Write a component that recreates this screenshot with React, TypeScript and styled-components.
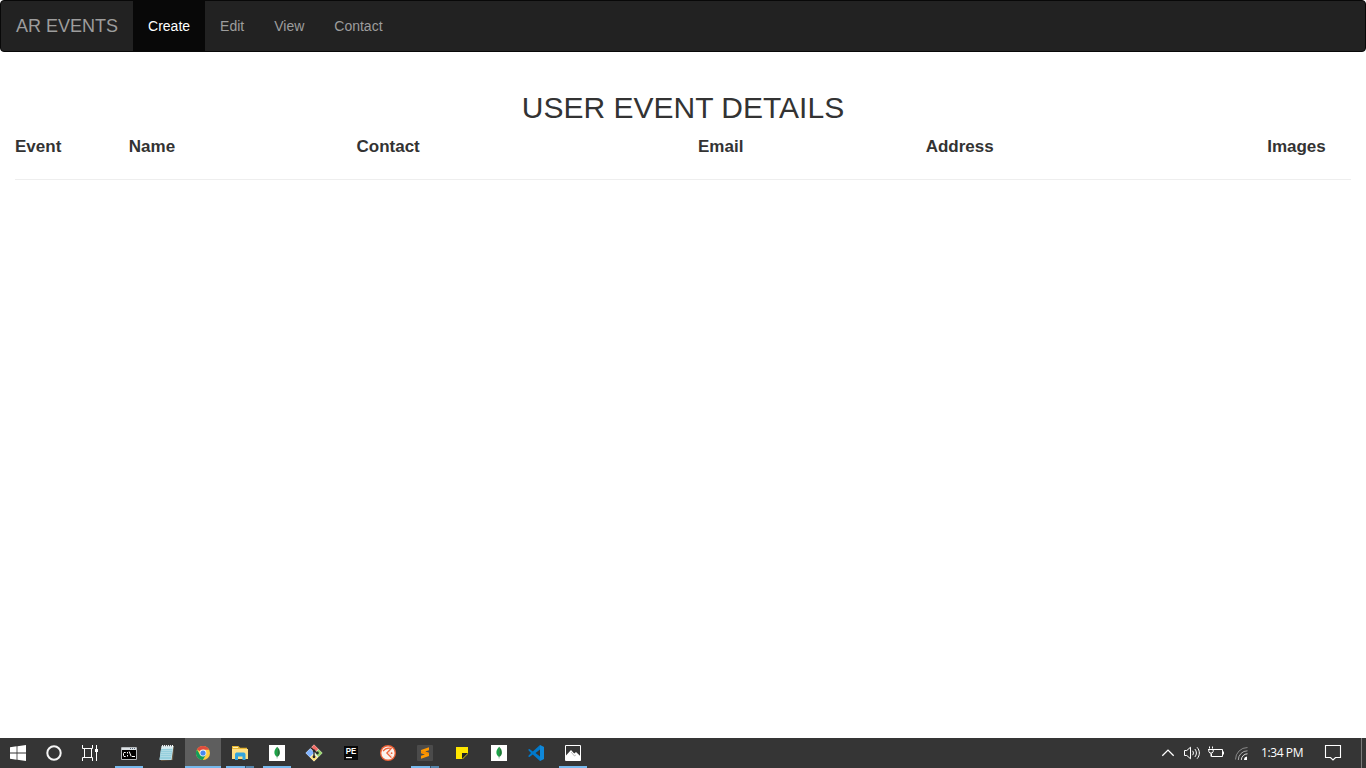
import React from "react";
import styled, { createGlobalStyle } from "styled-components";

const GlobalStyle = createGlobalStyle`
  * { box-sizing: border-box; }
  body {
    margin: 0;
    background: #fff;
    color: #333;
    font-family: "Liberation Sans", Arial, sans-serif;
    font-size: 14px;
    line-height: 1.42857143;
    overflow: hidden;
  }
`;

const Screen = styled.div`
  display: flex;
  flex-direction: column;
  height: 768px;
`;

const Navbar = styled.nav`
  display: flex;
  height: 52px;
  background: #222;
  border: 1px solid #080808;
  border-radius: 4px;
`;

const Brand = styled.a`
  padding: 15px;
  font-size: 18px;
  line-height: 20px;
  color: #9d9d9d;
`;

const NavLink = styled.a<{ $active?: boolean }>`
  padding: 15px;
  line-height: 20px;
  color: ${(p) => (p.$active ? "#fff" : "#9d9d9d")};
  background: ${(p) => (p.$active ? "#080808" : "transparent")};
`;

const Content = styled.main`
  flex: 1;
  padding: 39px 15px 0;
`;

const Title = styled.h2`
  margin: 0 0 11px;
  font-size: 30px;
  font-weight: 400;
  line-height: 33px;
  text-align: center;
`;

const HeaderRow = styled.div`
  display: grid;
  grid-template-columns: repeat(12, 1fr);
  margin: 0 -15px;
  font-size: 17px;
  font-weight: 700;
  line-height: 24px;
`;

const HeaderCell = styled.div<{ $span: number }>`
  grid-column: span ${(p) => p.$span};
  padding-left: 15px;
`;

const Divider = styled.hr`
  margin: 20px 0;
  border: 0;
  border-top: 1px solid #eee;
`;

const Taskbar = styled.footer`
  display: flex;
  height: 30px;
  background: #353535;
`;

const StartGroup = styled.div`
  display: flex;
  margin-right: 3px;
`;

const AppGroup = styled.div`
  display: flex;
  gap: 1px;
`;

type AppState = "idle" | "open" | "focused" | "stacked";

const underline: Record<AppState, string> = {
  idle: "none",
  open: "linear-gradient(#76b9ed, #76b9ed) 4px 28px / 28px 2px no-repeat",
  focused: "linear-gradient(#76b9ed, #76b9ed) 0 28px / 36px 2px no-repeat",
  stacked:
    "linear-gradient(90deg, #76b9ed 19px, #35536a 19px, #35536a 20px, #5485ab 20px) 4px 28px / 28px 2px no-repeat",
};

const TaskButton = styled.div<{ $state?: AppState }>`
  width: 36px;
  height: 30px;
  background: ${(p) => underline[p.$state ?? "idle"]};
  background-color: ${(p) => (p.$state === "focused" ? "#5e5e5e" : "transparent")};
`;

const Glyph = styled.svg`
  display: block;
  height: 30px;
`;

const Tray = styled.div`
  display: flex;
  margin-left: auto;
`;

const Clock = styled.div`
  width: 63px;
  padding-left: 9px;
  color: #fff;
  font: 12px/30px "Open Sans", "Noto Sans", sans-serif;
  letter-spacing: -0.4px;
  white-space: nowrap;
`;

const ShowDesktop = styled.div`
  width: 5px;
  margin-left: 10px;
  border-left: 1px solid #7b7b7b;
`;

const Icon = ({ w = 36, children }: { w?: number; children: React.ReactNode }) => (
  <Glyph width={w} height={30} viewBox={`0 0 ${w} 30`} fill="none">
    {children}
  </Glyph>
);

const WindowsIcon = () => (
  <Icon>
    <path fill="#fff" d="M10 9.2l6.6-.9v6.2H10zM17.4 8.2L26 7v7.5h-8.6zM10 15.4h6.6v6.3l-6.6-.9zM17.4 15.4H26V23l-8.6-1.2z" />
  </Icon>
);

const SearchIcon = () => (
  <Icon>
    <circle cx="18" cy="15" r="6.7" stroke="#f4f4f4" strokeWidth="2" />
  </Icon>
);

const TaskViewIcon = () => (
  <Icon>
    <path stroke="#fff" d="M10.5 7v3.5h10V7M10.5 23v-3.5h10V23M12.5 10.5v9M19.5 10.5v9M24.5 7v16" />
    <path fill="#fff" d="M23 11h3v3h-3z" />
  </Icon>
);

const TerminalIcon = () => (
  <Icon>
    <path fill="#000" stroke="#b5b9bc" d="M10.5 9.5h15v12h-15z" />
    <path fill="#dce2e5" d="M11 10h14v2H11z" />
    <path fill="#567" d="M19 10h1v1h-1zM21 10h1v1h-1zM23 10h1v1h-1z" />
    <path stroke="#fff" d="M14.7 14.5h-1.7l-.5 1v2l.5 1h1.7M16.5 14v1.5M16.5 17v1.5M18.2 13.5l2 5M21 18.5h3" />
  </Icon>
);

const NotepadIcon = () => (
  <Icon>
    <path fill="#6b5c45" d="M14 8h12l-1 14-12 1z" />
    <path fill="#d8edf2" d="M13.5 8h12l-2 14h-12z" />
    <path fill="#95cfdd" d="M13 11l11.6-.3L23 21.5H11.5z" />
    <path stroke="#c2e2e9" strokeWidth=".6" d="M13.5 12.5H24M13 14.5h10.7M12.7 16.5h10.7M12.5 18.5H23" />
    <path stroke="#fff" d="M14.5 7v2M16.5 7v2M18.5 7v2M20.5 7v2M22.5 7v2M24.5 7v2" />
    <path stroke="#7f8c92" strokeWidth=".5" d="M15.2 7v2M17.2 7v2M19.2 7v2M21.2 7v2M23.2 7v2" />
  </Icon>
);

const ChromeIcon = () => (
  <Icon>
    <circle cx="18" cy="15" r="7" fill="#ffcd40" />
    <path fill="#df4b3e" d="M18 15l-6.1-3.5A7 7 0 0 1 24.1 11.7H18z" />
    <path fill="#119d5b" d="M11.9 11.5A7 7 0 0 0 17.8 22l3.1-5.3L18 15l-3 1.7z" />
    <circle cx="18" cy="15" r="3.4" fill="#f5f5f5" />
    <circle cx="18" cy="15" r="2.6" fill="#4688f1" />
  </Icon>
);

const ExplorerIcon = () => (
  <Icon>
    <path fill="#e8b732" d="M10 8h6.5l1.5 1.7h7V13H10z" />
    <path fill="#fff2b3" d="M11 9h5v1h-5z" />
    <path fill="#ffe084" d="M10 11h16v10H10z" />
    <path fill="#33a5dd" d="M13 22v-6.2l1.2-1.3h8l1.3 1.3V22H20.5v-3.5h-4.5V22z" />
  </Icon>
);

const LeafIcon = () => (
  <Icon>
    <path fill="#fff" d="M10 7h16v16H10z" />
    <path fill="#1ba548" d="M18.2 8.7c-2 2-2.9 3.7-2.8 6 0 1.6 1 3.2 2.8 4.4z" />
    <path fill="#1c7a35" d="M18.2 8.7c2 2 2.8 3.6 2.7 6.2 0 1.5-1 3-2.8 4.2z" />
    <path stroke="#86b59a" strokeWidth=".8" d="M18.1 18.5v2" />
  </Icon>
);

const GitIcon = () => (
  <Icon>
    <path fill="#efeee8" d="M18 6.5l8.5 8.5-8.5 8.5L9.5 15z" />
    <path fill="#f16e68" d="M18 6.8l4.3 4.3-3 3L15 9.9z" />
    <path fill="#80b3ff" d="M14.1 10.8l4 4-4.3 4.3L9.8 15z" />
    <path fill="#ffe37d" d="M14.4 19.6l3.4-3.5 3.8 3.6-3.6 3.5z" />
    <path fill="#98d36f" d="M22.8 11.6l3.5 3.4-3.8 3.9-3.4-3.9z" />
    <path stroke="#26272b" strokeWidth="1.3" d="M14.5 9.5l6 5.2M18 12.5V20" />
    <circle cx="18" cy="12.7" r="1.3" fill="#26272b" />
    <circle cx="18" cy="18.8" r="1.4" fill="#26272b" />
    <circle cx="21.4" cy="15" r="1.4" fill="#26272b" />
  </Icon>
);

const PyCharmIcon = () => (
  <Icon>
    <path fill="#080808" d="M11 8h14v14H11z" />
    <path fill="#fff" d="M13 19h6v1.2h-6z" />
    <text x="12.7" y="16" fill="#fff" fontFamily="Liberation Sans, sans-serif" fontSize="9" fontWeight="700" textLength="10.5" lengthAdjust="spacingAndGlyphs">PE</text>
  </Icon>
);

const FishIcon = () => (
  <Icon>
    <circle cx="18" cy="15" r="8" fill="#ee6237" />
    <circle cx="18" cy="15" r="6.6" fill="#faf3ef" />
    <path stroke="#ee6237" strokeWidth="1.2" d="M13 13.2c2-2.8 4.5-3.6 8.2-2.9L16.8 15l4.6 4.6" />
    <path stroke="#ee6237" strokeWidth=".8" d="M21.4 10.3L18.7 15l3.6 3.8" opacity=".35" />
    <circle cx="21.6" cy="15.2" r=".9" fill="#ee6237" />
  </Icon>
);

const SublimeIcon = () => (
  <Icon>
    <rect x="10" y="7" width="16" height="16" rx="1" fill="#4b4b4b" />
    <path fill="#ff9800" d="M14 11.9l8-2.6v3L18.2 13.5l3.8 1.2v3.2l-8 2.8v-3l3.9-1.3-3.9-1.2z" />
    <path fill="#e87f00" d="M14 12.8l8 2.3v1.4l-8-2.1z" opacity=".5" />
  </Icon>
);

const StickyNotesIcon = () => (
  <Icon>
    <path fill="#ffe600" d="M12 9h12v12H12z" />
    <path fill="#212326" d="M18 15h6l-6 6z" />
    <path fill="#353535" d="M24 15.8V21h-5.2z" />
  </Icon>
);

const VSCodeIcon = () => (
  <Icon>
    <path fill="#0079cc" d="M22 7l4 1.9v12.2L22 23l-7.2-6.4-3.3 2.5L10 18.3l3-3.3-3-3.3 1.5-.8 3.3 2.5zM22 11.5L17.5 15l4.5 3.5z" />
    <path fill="#229bea" d="M22 7l4 1.9v12.2L22 23z" opacity=".45" />
  </Icon>
);

const PhotosIcon = () => (
  <Icon>
    <path fill="#353535" stroke="#fff" d="M10.5 7.5h15v15h-15z" />
    <path fill="#fff" d="M11 17.5l5-5.5 3.2 3.5 1.8-1.5 4.5 4.2v4.3H11z" />
    <path stroke="#777" d="M16 14l3.5 4 1.3-1" strokeWidth=".5" />
  </Icon>
);

const ChevronIcon = () => (
  <Icon w={24}>
    <path stroke="#fff" strokeWidth="1.3" d="M6.3 17.8l5.7-5.7 5.7 5.7" />
  </Icon>
);

const VolumeIcon = () => (
  <Icon w={24}>
    <path stroke="#fff" d="M4.5 12.5h2.3l3.7-3.3v11.6l-3.7-3.3H4.5zM12.5 12.8c1.2 1.4 1.2 3 0 4.4M14.8 11c2.1 2.4 2.1 5.6 0 8M17.1 9.3c3 3.4 3 8 0 11.4" />
  </Icon>
);

const BatteryIcon = () => (
  <Icon w={24}>
    <path stroke="#fff" d="M10 11.5h8.5v7h-11V16M19.5 13.5v3" />
    <path stroke="#fff" d="M5.5 8.5v2M8.5 8.5v2M4 11.5h6M4.8 12v1.5l1 1.5h2.4l1-1.5V12M7 15v3.5" />
  </Icon>
);

const WifiIcon = () => (
  <Icon w={24}>
    <path stroke="#888" d="M7.5 21.5A12 12 0 0 1 19.5 9.5" />
    <path stroke="#aaa" d="M10.3 22a9.2 9.2 0 0 1 9.2-9.2" />
    <path stroke="#ddd" d="M13.3 22a6.3 6.3 0 0 1 6.2-6.2" />
    <path fill="#fff" d="M16 22a3.5 3.5 0 0 1 3-3.5V22z" />
  </Icon>
);

const ActionCenterIcon = () => (
  <Icon>
    <path stroke="#fff" strokeWidth="1.1" d="M10.5 7.5h15v12h-5L18 22l-2.5-2.5h-5z" />
  </Icon>
);

const navLinks = ["Create", "Edit", "View", "Contact"];

const columns: [string, number][] = [
  ["Event", 1],
  ["Name", 2],
  ["Contact", 3],
  ["Email", 2],
  ["Address", 3],
  ["Images", 1],
];

const apps: [React.ComponentType, AppState][] = [
  [TerminalIcon, "open"],
  [NotepadIcon, "idle"],
  [ChromeIcon, "focused"],
  [ExplorerIcon, "stacked"],
  [LeafIcon, "open"],
  [GitIcon, "idle"],
  [PyCharmIcon, "idle"],
  [FishIcon, "idle"],
  [SublimeIcon, "stacked"],
  [StickyNotesIcon, "idle"],
  [LeafIcon, "idle"],
  [VSCodeIcon, "idle"],
  [PhotosIcon, "open"],
];

export default function App() {
  return (
    <Screen>
      <GlobalStyle />
      <Navbar>
        <Brand>AR EVENTS</Brand>
        {navLinks.map((label, i) => (
          <NavLink key={label} $active={i === 0}>
            {label}
          </NavLink>
        ))}
      </Navbar>
      <Content>
        <Title>USER EVENT DETAILS</Title>
        <HeaderRow>
          {columns.map(([label, span]) => (
            <HeaderCell key={label} $span={span}>
              {label}
            </HeaderCell>
          ))}
        </HeaderRow>
        <Divider />
      </Content>
      <Taskbar>
        <StartGroup>
          <TaskButton><WindowsIcon /></TaskButton>
          <TaskButton><SearchIcon /></TaskButton>
          <TaskButton><TaskViewIcon /></TaskButton>
        </StartGroup>
        <AppGroup>
          {apps.map(([AppIcon, state], i) => (
            <TaskButton key={i} $state={state}>
              <AppIcon />
            </TaskButton>
          ))}
        </AppGroup>
        <Tray>
          <ChevronIcon />
          <VolumeIcon />
          <BatteryIcon />
          <WifiIcon />
          <Clock>1:34 PM</Clock>
          <ActionCenterIcon />
          <ShowDesktop />
        </Tray>
      </Taskbar>
    </Screen>
  );
}
